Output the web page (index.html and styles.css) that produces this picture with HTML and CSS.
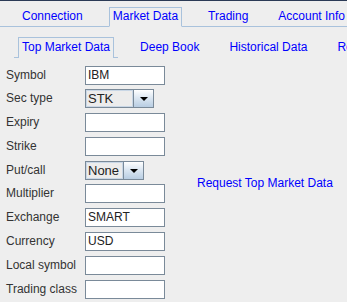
FILE: index.html
```html
<html>
<head>
    <title>Top Market Data</title>
<link rel="stylesheet" href="styles.css">
</head>
<body>

<div class="titlebar"></div>

<div class="tabs main-tabs">
  <span class="tab">Connection</span>
  <span class="tab selected">Market Data</span>
  <span class="tab">Trading</span>
  <span class="tab">Account Info</span>
</div>

<div class="tabs sub-tabs">
  <span class="tab selected">Top Market Data</span>
  <span class="tab">Deep Book</span>
  <span class="tab">Historical Data</span>
  <span class="tab">Real Time Bars</span>
</div>

<div class="content">
  <div class="fields">
    <span class="label">Symbol</span>
    <span class="field">IBM</span>

    <span class="label">Sec type</span>
    <span class="combo sectype"><span class="value">STK</span><span class="arrow"><i></i></span></span>

    <span class="label">Expiry</span>
    <span class="field"></span>

    <span class="label">Strike</span>
    <span class="field"></span>

    <span class="label">Put/call</span>
    <span class="combo putcall"><span class="value">None</span><span class="arrow"><i></i></span></span>

    <span class="label">Multiplier</span>
    <span class="field"></span>

    <span class="label">Exchange</span>
    <span class="field">SMART</span>

    <span class="label">Currency</span>
    <span class="field">USD</span>

    <span class="label">Local symbol</span>
    <span class="field"></span>

    <span class="label">Trading class</span>
    <span class="field"></span>
  </div>

  <div class="action">
    <span class="link">Request Top Market Data</span>
  </div>
</div>

</body>
</html>
```

FILE: styles.css
```css
body {
    margin: 0;
    width: 347px;
    height: 302px;
    overflow: hidden;
    background-color: #eeeeee;
    font-family: "Liberation Sans", Arial, sans-serif;
    font-size: 12px;
    color: #333333;
}

.titlebar {
    height: 1px;
    background-color: #2b3a55;
}

.tabs {
    display: flex;
    white-space: nowrap;
    padding-left: 7px;
}

.tab {
    margin: 0 11px;
    padding: 0 3px;
    border: 1px solid transparent;
    color: #0000ff;
    line-height: 17px;
}

.main-tabs {
    margin-top: 6px;
    border-bottom: 1px solid #a9c2dc;
}

.main-tabs .tab.selected {
    border-color: #a9c2dc;
    border-bottom: 1px solid #eeeeee;
    margin-bottom: -1px;
    background-color: #eeeeee;
}

.sub-tabs {
    margin-top: 10px;
}

.sub-tabs .tab {
    line-height: 19px;
}

.sub-tabs .tab.selected {
    position: relative;
    border-color: #a9c2dc;
    border-bottom: none;
}

.sub-tabs .tab.selected::before,
.sub-tabs .tab.selected::after {
    content: "";
    position: absolute;
    bottom: 0;
    width: 4px;
    border-bottom: 1px solid #a9c2dc;
}

.sub-tabs .tab.selected::before {
    left: -5px;
}

.sub-tabs .tab.selected::after {
    right: -5px;
}

.content {
    display: flex;
    margin-top: 8px;
}

.fields {
    display: grid;
    grid-template-columns: 79px 80px;
    grid-template-rows: 23px 24px 24px 24px 23px 24px 24px 24px 24px 24px;
    padding-left: 6px;
}

.label {
    line-height: 19px;
    white-space: nowrap;
}

.field {
    box-sizing: border-box;
    height: 19px;
    padding: 0 2px;
    border: 1px solid #7a8a99;
    background-color: #ffffff;
    line-height: 17px;
    color: #222222;
}

.combo {
    box-sizing: border-box;
    display: flex;
    height: 19px;
    border: 1px solid #7a8a99;
}

.combo.sectype {
    width: 69px;
}

.combo.putcall {
    width: 59px;
}

.combo .value {
    flex: 1;
    padding: 0 2px;
    line-height: 17px;
    font-size: 13px;
    color: #222222;
    background-color: #ececec;
    box-shadow: inset 0 0 0 1px #c9d7e6;
}

.combo .arrow {
    display: flex;
    align-items: center;
    justify-content: center;
    width: 19px;
    border-left: 1px solid #7a8a99;
    background: linear-gradient(to bottom, #ffffff, #dce7f2 45%, #b8cde2);
}

.combo .arrow i {
    width: 0;
    height: 0;
    border-left: 4px solid transparent;
    border-right: 4px solid transparent;
    border-top: 4px solid #000000;
}

.action {
    flex: 1;
    display: flex;
    align-items: center;
    padding-left: 32px;
    padding-bottom: 4px;
}

.link {
    color: #0000ff;
    white-space: nowrap;
}
```
